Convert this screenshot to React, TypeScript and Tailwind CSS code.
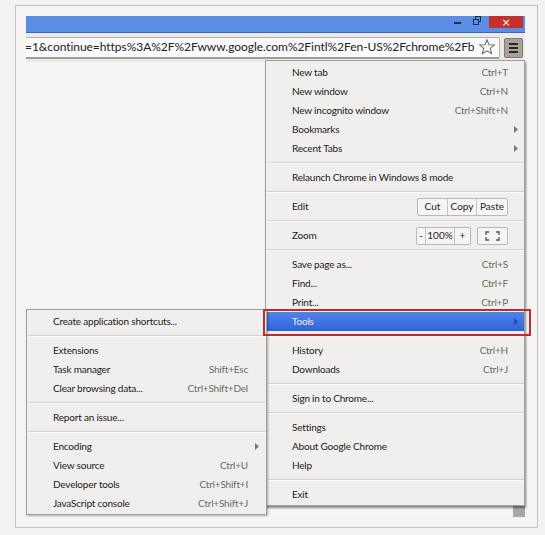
import React from 'react';

type Item = {
  label?: string;
  shortcut?: string;
  arrow?: boolean;
  sep?: boolean;
  kind?: 'edit' | 'zoom';
  active?: boolean;
};

const mainMenu: Item[] = [
  { label: 'New tab', shortcut: 'Ctrl+T' },
  { label: 'New window', shortcut: 'Ctrl+N' },
  { label: 'New incognito window', shortcut: 'Ctrl+Shift+N' },
  { label: 'Bookmarks', arrow: true },
  { label: 'Recent Tabs', arrow: true },
  { sep: true },
  { label: 'Relaunch Chrome in Windows 8 mode' },
  { sep: true },
  { label: 'Edit', kind: 'edit' },
  { sep: true },
  { label: 'Zoom', kind: 'zoom' },
  { sep: true },
  { label: 'Save page as...', shortcut: 'Ctrl+S' },
  { label: 'Find...', shortcut: 'Ctrl+F' },
  { label: 'Print...', shortcut: 'Ctrl+P' },
  { label: 'Tools', arrow: true, active: true },
  { sep: true },
  { label: 'History', shortcut: 'Ctrl+H' },
  { label: 'Downloads', shortcut: 'Ctrl+J' },
  { sep: true },
  { label: 'Sign in to Chrome...' },
  { sep: true },
  { label: 'Settings' },
  { label: 'About Google Chrome' },
  { label: 'Help' },
  { sep: true },
  { label: 'Exit' },
];

const toolsMenu: Item[] = [
  { label: 'Create application shortcuts...' },
  { sep: true },
  { label: 'Extensions' },
  { label: 'Task manager', shortcut: 'Shift+Esc' },
  { label: 'Clear browsing data...', shortcut: 'Ctrl+Shift+Del' },
  { sep: true },
  { label: 'Report an issue...' },
  { sep: true },
  { label: 'Encoding', arrow: true },
  { label: 'View source', shortcut: 'Ctrl+U' },
  { label: 'Developer tools', shortcut: 'Ctrl+Shift+I' },
  { label: 'JavaScript console', shortcut: 'Ctrl+Shift+J' },
];

const Arrow = ({ color }: { color: string }) => (
  <svg width="4" height="7" viewBox="0 0 4 7">
    <polygon points="0,0 4,3.5 0,7" fill={color} />
  </svg>
);

const EditButtons = () => (
  <div className="flex h-[18px] border border-[#b9b8b6] rounded-[2px] bg-[#f6f5f3] text-[#222]">
    <div className="w-[30px] flex items-center justify-center border-r border-[#c6c5c3]">Cut</div>
    <div className="w-[29px] flex items-center justify-center border-r border-[#c6c5c3]">Copy</div>
    <div className="w-[30px] flex items-center justify-center">Paste</div>
  </div>
);

const ZoomButtons = () => (
  <div className="flex gap-[6px]">
    <div className="flex h-[18px] border border-[#b9b8b6] rounded-[2px] bg-[#f6f5f3] text-[#222]">
      <div className="w-[9px] flex items-center justify-center border-r border-[#c6c5c3]">-</div>
      <div className="w-[29px] flex items-center justify-center border-r border-[#c6c5c3]">100%</div>
      <div className="w-[15px] flex items-center justify-center">+</div>
    </div>
    <div className="w-[31px] h-[18px] flex items-center justify-center border border-[#b9b8b6] rounded-[2px] bg-[#f6f5f3]">
      <svg width="15" height="10" viewBox="0 0 15 10" fill="none" stroke="#555" strokeWidth="1.3">
        <path d="M1 4V1h3M11 1h3v3M14 6v3h-3M4 9H1V6" />
      </svg>
    </div>
  </div>
);

const Menu = ({ items, arrowCol, className }: { items: Item[]; arrowCol: string; className: string }) => (
  <div className={className}>
    {items.map((it, i) =>
      it.sep ? (
        <div key={i} className="h-[10px] flex flex-col justify-center">
          <div className="h-px bg-[#d3d2d0]" />
          <div className="h-px bg-[#fbfbfa]" />
        </div>
      ) : (
        <div
          key={i}
          className={
            'h-[19px] flex items-center pl-[26px] ' +
            (it.active ? 'bg-gradient-to-b from-[#4f83ea] to-[#2f64d8] text-[#e9eefa]' : 'text-[#1c1a1a]')
          }
        >
          <span className="flex-1 whitespace-nowrap tracking-[-0.2px]">{it.label}</span>
          {it.shortcut && <span className="text-[#6b6a68] whitespace-nowrap tracking-[-0.2px]">{it.shortcut}</span>}
          {it.kind === 'edit' && <EditButtons />}
          {it.kind === 'zoom' && <ZoomButtons />}
          <span className={arrowCol + ' flex items-center justify-center'}>
            {it.arrow && <Arrow color={it.active ? '#1d4cb3' : '#7a7977'} />}
          </span>
        </div>
      )
    )}
  </div>
);

export default function App() {
  return (
    <div className="relative w-[545px] h-[535px] bg-[#f3f2f0] pt-[5px] pl-[15px] font-['Lato',sans-serif] text-[10px]">
      <div className="w-[523px] h-[523px] border border-[#c4c3c1] bg-[#f5f4f2] pt-[10px] pl-[10px]">
        <div className="relative w-[499px] flex flex-col">
          {/* title bar */}
          <div className="h-[17px] bg-[#5a8de4] border-b border-[#3d68b8] flex justify-end items-start">
            <div className="w-[7px] h-[2px] bg-[#1d2c4d] mt-[6px] mr-[12px]" />
            <div className="relative w-[8px] h-[9px] mr-[8px]">
              <div className="absolute left-[2px] top-0 w-[6px] h-[6px] border-[1.5px] border-[#1d2c4d]" />
              <div className="absolute left-0 top-[3px] w-[6px] h-[6px] border-[1.5px] border-[#1d2c4d] bg-[#5a8de4]" />
            </div>
            <div className="w-[34px] h-[12px] bg-[#c6302c] flex items-center justify-center mr-[2px]">
              <span className="text-white text-[11px] leading-none font-['DejaVu_Sans',sans-serif]">×</span>
            </div>
          </div>
          {/* toolbar */}
          <div className="h-[29px] bg-[#eae9e7] flex items-center">
            <div className="flex-1 min-w-0 h-[22px] bg-[#fafafa] border-t border-[#aeadab] border-b-[2px] border-b-[#9d9c9a] border-r border-r-[#b8b7b5] rounded-r-[2px] flex items-center">
              <span className="flex-1 min-w-0 overflow-hidden whitespace-nowrap text-[12px] text-[#222] -ml-[1px] tracking-[-0.05px]">
                =1&amp;continue=https%3A%2F%2Fwww.google.com%2Fintl%2Fen-US%2Fchrome%2Fb
              </span>
              <svg width="18" height="18" viewBox="0 0 24 24" fill="none" stroke="#6d6c6a" strokeWidth="1.4" className="shrink-0 mr-[3px]">
                <polygon points="12,2.5 14.8,9 21.8,9.4 16.4,13.9 18.1,20.8 12,17 5.9,20.8 7.6,13.9 2.2,9.4 9.2,9" />
              </svg>
            </div>
            <div className="shrink-0 w-[19px] h-[20px] ml-[4px] mr-[2px] bg-[#a7a19a] border border-[#7f7972] rounded-[2px] flex flex-col items-center justify-center gap-[2px]">
              <div className="w-[9px] h-[2px] bg-[#2a2826]" />
              <div className="w-[9px] h-[2px] bg-[#2a2826]" />
              <div className="w-[9px] h-[2px] bg-[#2a2826]" />
            </div>
          </div>
          {/* page content */}
          <div className="h-[455px] bg-[#f6f5f3] flex flex-col justify-end items-end">
            <div className="w-[12px] h-[12px] bg-[#a9a8a6]" />
          </div>

          {/* main chrome menu */}
          <Menu
            items={mainMenu}
            arrowCol="w-[16px]"
            className="absolute left-[239px] top-[44px] w-[260px] bg-[#f0efed] border border-[#a09f9d] pt-[2px] pb-[1px] shadow-[1px_2px_2px_rgba(0,0,0,0.45)]"
          />
          {/* tools submenu */}
          <Menu
            items={toolsMenu}
            arrowCol="w-[18px]"
            className="absolute left-0 top-[293px] w-[241px] bg-[#f0efed] border border-[#a09f9d] pt-[2px] pb-[1px] shadow-[1px_1px_2px_rgba(0,0,0,0.3)]"
          />
        </div>
      </div>
      {/* highlight annotation */}
      <div className="absolute z-10 left-[263px] top-[309px] w-[268px] h-[27px] border-2 border-[#c2292e]" />
    </div>
  );
}
